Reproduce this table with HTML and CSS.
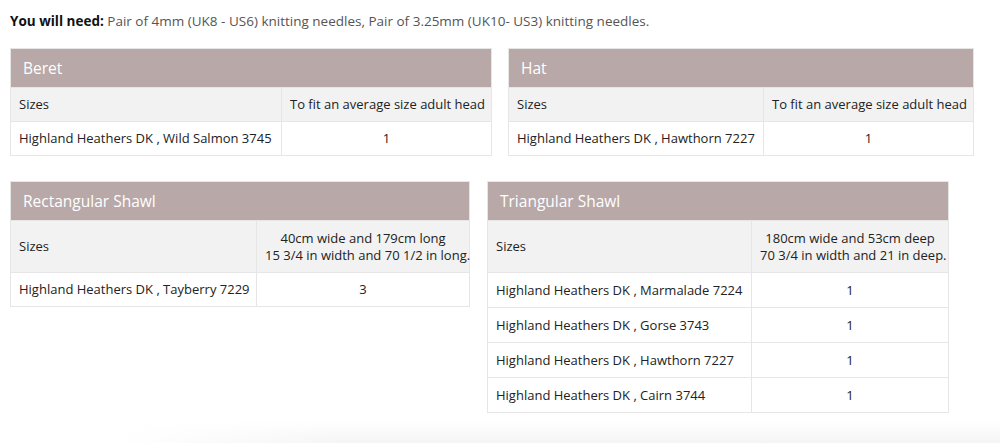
FILE: index.html
```html
<!DOCTYPE html>
<html lang="en">
<head>
<meta charset="utf-8">
<title>Knitting pattern requirements</title>
<link rel="stylesheet" href="styles.css">
</head>
<body>
<main class="page">
  <p class="need"><strong>You will need:</strong> Pair of 4mm (UK8 - US6) knitting needles, Pair of 3.25mm (UK10- US3) knitting needles.</p>

  <div class="row row-1">
    <table class="yarn beret">
      <colgroup><col class="c1"><col></colgroup>
      <thead><tr><th colspan="2">Beret</th></tr></thead>
      <tbody>
        <tr class="sizes"><td>Sizes</td><td class="num">To fit an average size adult head</td></tr>
        <tr><td>Highland Heathers DK , Wild Salmon 3745</td><td class="num">1</td></tr>
      </tbody>
    </table>
    <table class="yarn hat">
      <colgroup><col class="c1"><col></colgroup>
      <thead><tr><th colspan="2">Hat</th></tr></thead>
      <tbody>
        <tr class="sizes"><td>Sizes</td><td class="num">To fit an average size adult head</td></tr>
        <tr><td>Highland Heathers DK , Hawthorn 7227</td><td class="num">1</td></tr>
      </tbody>
    </table>
  </div>

  <div class="row row-2">
    <table class="yarn rect">
      <colgroup><col class="c1"><col></colgroup>
      <thead><tr><th colspan="2">Rectangular Shawl</th></tr></thead>
      <tbody>
        <tr class="sizes tall"><td>Sizes</td><td class="num">40cm wide and 179cm long<br>15 3/4 in width and 70 1/2 in long.</td></tr>
        <tr><td>Highland Heathers DK , Tayberry 7229</td><td class="num">3</td></tr>
      </tbody>
    </table>
    <table class="yarn tri">
      <colgroup><col class="c1"><col></colgroup>
      <thead><tr><th colspan="2">Triangular Shawl</th></tr></thead>
      <tbody>
        <tr class="sizes tall"><td>Sizes</td><td class="num">180cm wide and 53cm deep<br>70 3/4 in width and 21 in deep.</td></tr>
        <tr><td>Highland Heathers DK , Marmalade 7224</td><td class="num">1</td></tr>
        <tr><td>Highland Heathers DK , Gorse 3743</td><td class="num">1</td></tr>
        <tr><td>Highland Heathers DK , Hawthorn 7227</td><td class="num">1</td></tr>
        <tr><td>Highland Heathers DK , Cairn 3744</td><td class="num">1</td></tr>
      </tbody>
    </table>
  </div>
  <div class="fade"></div>
</main>
</body>
</html>
```

FILE: styles.css
```css
html, body {
  margin: 0;
  padding: 0;
  background: #fff;
}
body {
  font-family: "Open Sans", "Noto Sans", sans-serif;
  color: #222;
  font-size: 13px;
}
.page {
  padding: 0 0 0 10px;
  overflow: hidden;
  height: 443px;
  box-sizing: border-box;
}
.need {
  margin: 0;
  padding-top: 13px;
  height: 35px;
  box-sizing: border-box;
  line-height: 17px;
  color: #555;
  font-size: 13.5px;
}
.need strong {
  color: #111;
  font-weight: 700;
}
.row {
  display: flex;
  align-items: flex-start;
}
.row-1 { gap: 16px; margin-top: 13px; }
.row-2 { gap: 17px; margin-top: 25px; }
.yarn {
  border-collapse: collapse;
  table-layout: fixed;
  border: 1px solid #e6e6e6;
}
.yarn th {
  background: #b8a8a8;
  color: #fff;
  font-weight: 400;
  font-size: 15.5px;
  text-align: left;
  height: 38px;
  padding: 0 12px;
  border: 1px solid #e6e6e6;
}
.yarn td {
  height: 33px;
  padding: 0 8px;
  border: 1px solid #e6e6e6;
  line-height: 17px;
  white-space: nowrap;
}
.yarn .sizes td { background: #f2f2f2; }
.yarn .tall td { height: 51px; }
.yarn td.num { text-align: center; }
.tri td { height: 34px; }
.beret { width: 482px; }
.beret .c1 { width: 271px; }
.hat { width: 466px; }
.hat .c1 { width: 255px; }
.rect { width: 460px; }
.rect .c1 { width: 246px; }
.tri { width: 462px; }
.tri .c1 { width: 264px; }
.fade {
  margin: 8px 0 0 -10px;
  height: 30px;
  background:
    linear-gradient(to right, #fff 12%, rgba(255,255,255,0) 35%),
    linear-gradient(to bottom, #fff, #f1f1f1);
}
```
